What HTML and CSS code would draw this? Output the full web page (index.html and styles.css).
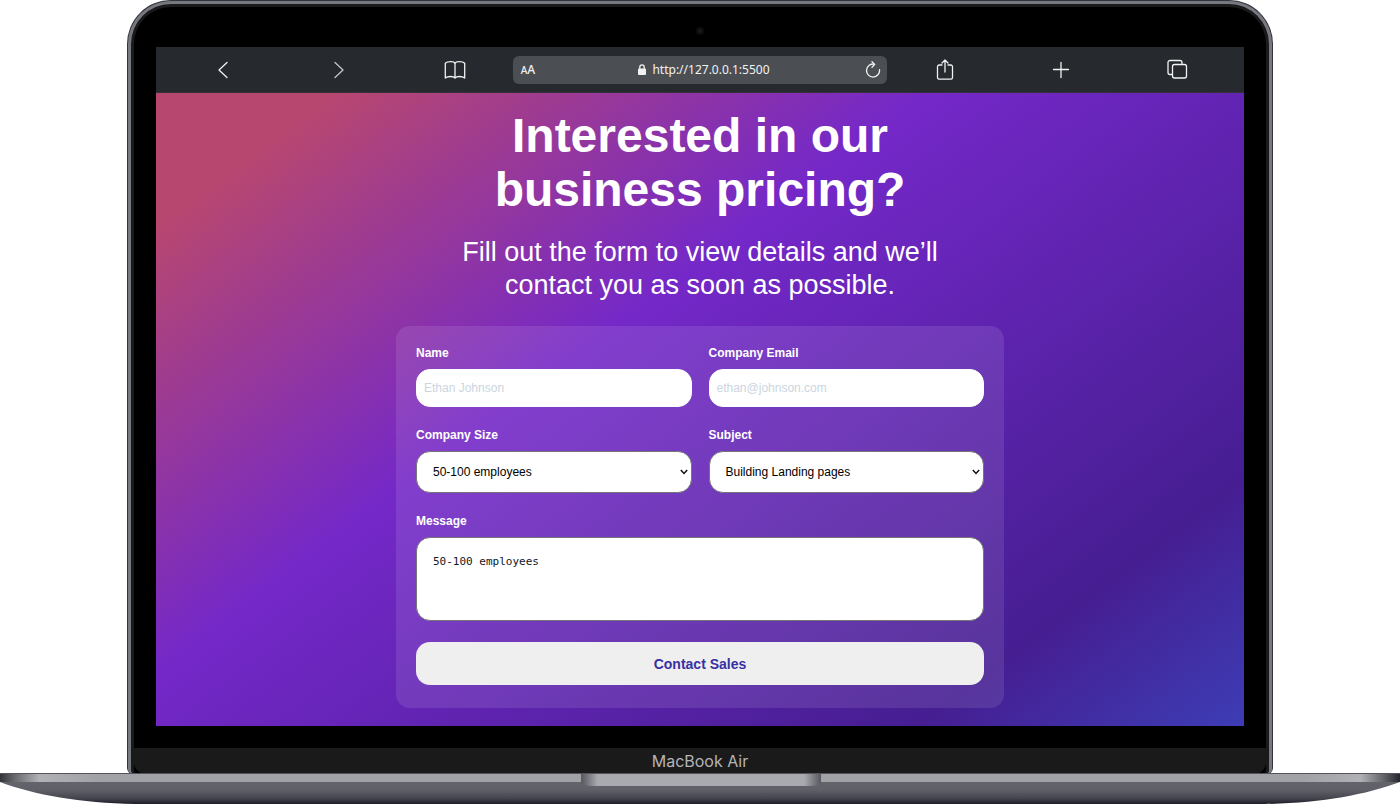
FILE: index.html
```html
<!DOCTYPE html>
<html lang="en">
<head>
<meta charset="utf-8">
<meta name="viewport" content="width=device-width, initial-scale=1">
<title>Contact Sales</title>
<link rel="stylesheet" href="styles.css">
</head>
<body>
<div class="laptop">
  <div class="lid"><div class="rim"><div class="bezel">
    <div class="camera-bar"><span class="camera"></span></div>
    <div class="screen">
      <header class="toolbar">
        <button class="tool" type="button" aria-label="Back"><svg width="24" height="24" viewBox="0 0 24 24"><path d="M16 4.500 8 12l8 7.500"/></svg></button>
        <button class="tool tool-dim" type="button" aria-label="Forward"><svg width="24" height="24" viewBox="0 0 24 24"><path d="m8 4.500 8 7.500-8 7.500"/></svg></button>
        <button class="tool" type="button" aria-label="Bookmarks"><svg width="24" height="24" viewBox="0 0 24 24"><path d="M12 20V5.500C11.500 4.300 9.800 3.700 7.800 3.700 5.500 3.700 3.300 4.200 2.300 5.200V20C3.500 19 5.500 18.500 7.500 18.500 9.500 18.500 11.200 19 12 20 12.800 19 14.500 18.500 16.500 18.500 18.500 18.500 20.500 19 21.700 20V5.200C20.700 4.200 18.500 3.700 16.200 3.700 14.200 3.700 12.500 4.300 12 5.500"/></svg></button>
        <div class="address">
          <span class="reader"><small>A</small>A</span>
          <span class="url"><svg class="lock" width="8" height="11" viewBox="0 0 8 11"><rect x="0" y="4.500" width="8" height="6.500" rx="1"/><path d="M1.800 5V3a2.200 2.200 0 0 1 4.400 0v2"/></svg>http://127.0.0.1:5500</span>
          <button class="reload" type="button" aria-label="Reload"><svg width="16" height="18" viewBox="0 0 16 18"><path d="M9.500 3.200A6.500 6.500 0 1 0 14.500 8.700M7 .8 9.700 3.400 7 6.200"/></svg></button>
        </div>
        <button class="tool" type="button" aria-label="Share"><svg width="24" height="24" viewBox="0 0 24 24"><path d="M9 7H6A1.800 1.800 0 0 0 4.500 8.500V19.700A1.800 1.800 0 0 0 6 21.200H18A1.800 1.800 0 0 0 19.500 19.700V8.500A1.800 1.800 0 0 0 18 7H15M12 14V2M9 5l3-3 3 3"/></svg></button>
        <button class="tool" type="button" aria-label="New tab"><svg width="24" height="24" viewBox="0 0 24 24"><path d="M12 4.500v15M4.500 11.500h15"/></svg></button>
        <button class="tool" type="button" aria-label="Tabs"><svg width="24" height="24" viewBox="0 0 24 24"><path d="M7 16.500H5A2 2 0 0 1 3 14.500V4.500A2 2 0 0 1 5 2.500H15A2 2 0 0 1 17 4.500V6.500"/><rect x="7.500" y="6.500" width="14" height="13.500" rx="2"/></svg></button>
      </header>
      <main class="page">
        <h1 class="title">Interested in our<br>business pricing?</h1>
        <p class="subtitle">Fill out the form to view details and we’ll<br>contact you as soon as possible.</p>
        <form class="card">
          <div class="field"><label for="name">Name</label><input class="control" id="name" type="text" placeholder="Ethan Johnson"></div>
          <div class="field"><label for="email">Company Email</label><input class="control" id="email" type="email" placeholder="ethan@johnson.com"></div>
          <div class="field"><label for="size">Company Size</label><select class="control" id="size"><option>50-100 employees</option></select></div>
          <div class="field"><label for="subject">Subject</label><select class="control" id="subject"><option>Building Landing pages</option></select></div>
          <div class="field field-wide"><label for="message">Message</label><textarea class="control" id="message">50-100 employees</textarea></div>
          <button class="submit" type="submit">Contact Sales</button>
        </form>
      </main>
    </div>
    <div class="chin">MacBook Air</div>
  </div></div></div>
  <svg class="base" viewBox="0 0 1400 31" preserveAspectRatio="none" aria-hidden="true">
    <defs>
      <linearGradient id="top"><stop offset="0" stop-color="#33343a"/><stop offset=".01" stop-color="#66676d"/><stop offset=".028" stop-color="#b0b1b5"/><stop offset=".07" stop-color="#a1a2a6"/><stop offset=".93" stop-color="#a1a2a6"/><stop offset=".972" stop-color="#b0b1b5"/><stop offset=".99" stop-color="#5b5c62"/><stop offset="1" stop-color="#25262e"/></linearGradient>
      <linearGradient id="under" x2="0" y2="1"><stop offset="0" stop-color="#63646b"/><stop offset=".35" stop-color="#606168"/><stop offset=".75" stop-color="#43444d"/><stop offset="1" stop-color="#1d1d28"/></linearGradient>
      <linearGradient id="notch"><stop offset="0" stop-color="#55565e"/><stop offset=".07" stop-color="#a9aab0"/><stop offset=".93" stop-color="#a9aab0"/><stop offset="1" stop-color="#55565e"/></linearGradient>
    </defs>
    <path fill="url(#under)" d="M0 9C35 22 80 30 135 31H1265C1320 30 1365 22 1400 9Z"/>
    <path fill="url(#top)" d="M0 0H1400V9H0Z"/>
    <path fill="#54555c" d="M0 0H1400V1H0Z"/>
    <path fill="url(#notch)" d="M581 1H821V9Q820 13 809 13H593Q582 13 581 9Z"/>
  </svg>
</div>
</body>
</html>
```
FILE: styles.css
```css
*, *::before, *::after { box-sizing: border-box; }
body { margin: 0; background: #fff; font-family: "Liberation Sans", Arial, sans-serif; }
button, input, select { font-family: inherit; }
.laptop { display: flex; flex-direction: column; align-items: center; }
.lid { width: 81.9%; padding: 1px 1px 0; background: #33343b; border-radius: 44px 44px 6px 6px; }
.rim { padding: 3px 3px 0; background: #777980; border-radius: 43px 43px 5px 5px; }
.bezel { border: 3px solid #1a1a1c; border-bottom: 0; background: #000; border-radius: 40px 40px 4px 4px; overflow: hidden; }
.camera-bar { height: 40px; display: flex; align-items: center; justify-content: center; padding-top: 8px; }
.camera { width: 8px; height: 8px; border-radius: 50%; background: #17181c; border: 2px solid #0d0d0f; }
.screen { margin: 0 22px; }

.toolbar { height: 46px; padding: 0 9px; display: grid; grid-template-columns: repeat(3, 1fr) 35% repeat(3, 1fr); align-items: center; background: #262a2e; border-bottom: 1px solid #34313b; }
.tool, .reload { display: flex; justify-content: center; padding: 0; border: 0; background: none; color: #f2f2f2; }
.tool-dim { color: #c4c6c8; }
.toolbar svg { fill: none; stroke: currentColor; stroke-width: 1.3; stroke-linecap: round; stroke-linejoin: round; }
.address { height: 28px; padding: 0 6px 0 8px; display: grid; grid-template-columns: 1fr auto 1fr; align-items: center; border-radius: 6px; background: #4b4e52; color: #f2f2f2; font: 12px "Noto Sans", sans-serif; }
.reader { font-weight: 500; }
.reader small { font-size: 10px; }
.url { display: flex; align-items: center; gap: 6px; padding-left: 6px; }
.toolbar .lock rect { fill: currentColor; stroke: none; }
.reload { justify-self: end; }

.page { padding: 16px 20px 18px; display: flex; flex-direction: column; align-items: center; color: #fff; background: linear-gradient(143deg, #b8476f 9%, #7428c8 40%, #461e92 83%, #3d3db5 100%); }
.title { margin: 0; font-size: 48px; line-height: 54px; text-align: center; }
.subtitle { margin: 19px 0 24px; font-size: 27px; line-height: 33px; text-align: center; }
.card { width: 100%; max-width: 608px; padding: 20px 20px 23px; display: grid; grid-template-columns: 1fr 1fr; gap: 21px 17px; border-radius: 14px; background: rgba(255, 255, 255, .1); }
.field { display: flex; flex-direction: column; gap: 8px; font-size: 12px; line-height: 15px; }
.field label { font-weight: 700; }
.field-wide, .submit { grid-column: 1 / -1; }
.control { width: 100%; margin: 0; border: 1px solid #767676; border-radius: 14px; background: #fff; color: #000; font-size: 12px; }
input.control { height: 38px; padding: 0 7px; border-color: #fff; }
input.control::placeholder { color: #cbd5e1; }
select.control { height: 42px; padding: 0 16px; appearance: none; background: #fff url("data:image/svg+xml,%3Csvg xmlns='http://www.w3.org/2000/svg' width='8' height='6' viewBox='0 0 8 6'%3E%3Cpath d='M.8 1 4 4.400 7.200 1' fill='none' stroke='%23111' stroke-width='1.500'/%3E%3C/svg%3E") no-repeat right 3px center; }
textarea.control { height: 84px; padding: 16px; display: block; resize: none; font: 11px/16px "DejaVu Sans Mono", monospace; color: #0f172a; }
.submit { height: 43px; border: 0; border-radius: 14px; background: #efefef; color: #3730a3; font-size: 14px; font-weight: 700; }

.chin { height: 26px; margin-top: 22px; display: flex; align-items: center; justify-content: center; background: #1a1a1a; border-radius: 0 0 12px 12px; color: #b4b4b8; font: 16px Inter, sans-serif; }
.base { display: block; width: 100%; height: 31px; margin-top: -1px; }
```
